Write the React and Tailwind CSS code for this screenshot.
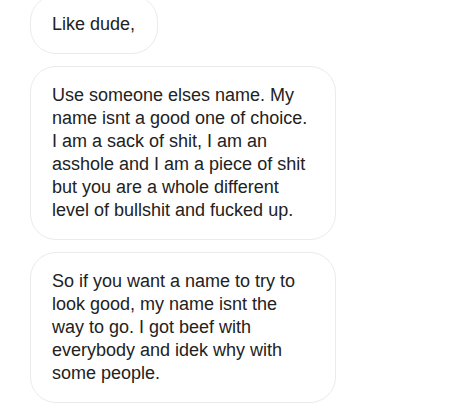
const messages = [
  'Like dude,',
  'Use someone elses name. My name isnt a good one of choice. I am a sack of shit, I am an asshole and I am a piece of shit but you are a whole different level of bullshit and fucked up.',
  'So if you want a name to try to look good, my name isnt the way to go. I got beef with everybody and idek why with some people.',
  'Anyway, that is all I have to say about it.',
];

export default function App() {
  return (
    <div
      className="h-[415px] w-[476px] overflow-hidden bg-white"
      style={{ fontFamily: '"Liberation Sans", Arial, sans-serif' }}
    >
      <div className="-mt-[5px] flex flex-col items-start gap-[12px] pl-[30px]">
        {messages.map((text, i) => (
          <div
            key={i}
            className="max-w-[306px] rounded-[26px] border border-[#ebebeb] bg-white py-[17px] pl-[21px] pr-[22px] text-[18px] leading-[23px] text-[#222]"
          >
            {text}
          </div>
        ))}
      </div>
    </div>
  );
}
